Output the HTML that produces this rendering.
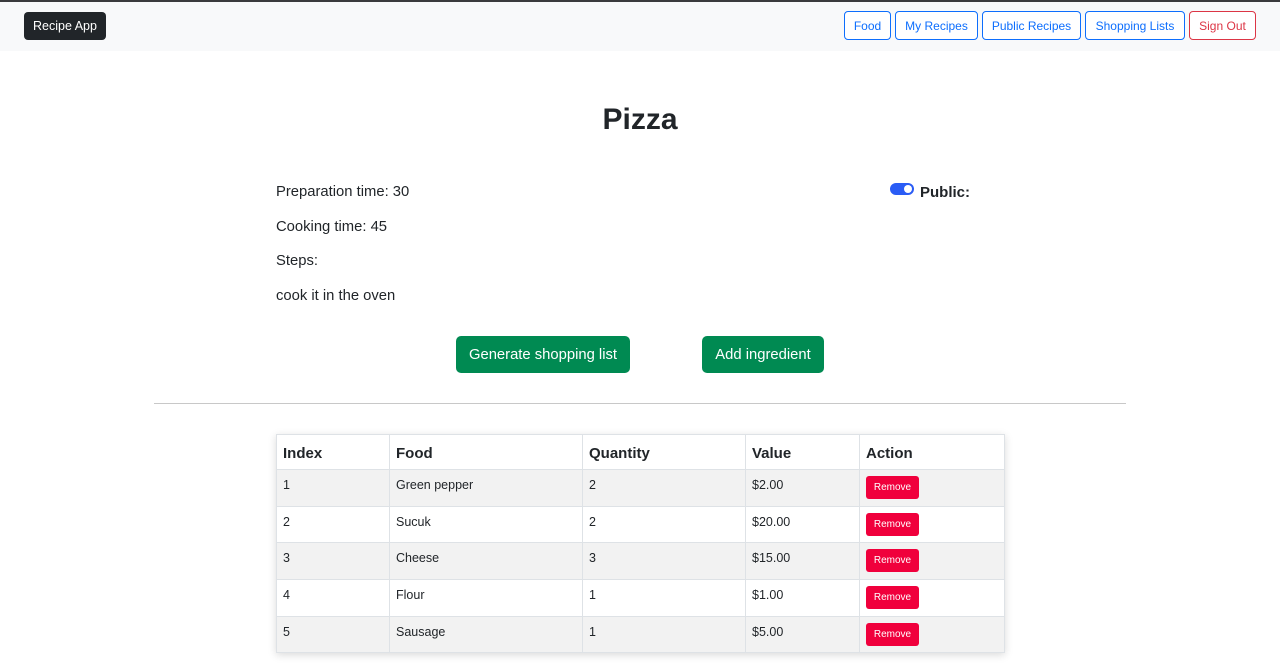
<!DOCTYPE html>
<html><head><style>
*{box-sizing:border-box;margin:0;padding:0}
body{width:1280px;height:666px;overflow:hidden;background:#fff;font-family:"Liberation Sans",sans-serif;color:#212529;position:relative}
.top{position:absolute;left:0;top:0;width:1280px;height:2px;background:#3a3b3d}
.nav{position:absolute;left:0;top:2px;width:1280px;height:49px;background:#f8f9fa}
.brand{position:absolute;left:24px;top:10px;width:82px;height:28px;background:#212529;color:#fff;border-radius:4px;font-size:12.5px;line-height:28px;text-align:center}
.nb{position:absolute;top:9px;height:29px;border:1px solid #0d6efd;color:#0d6efd;border-radius:4px;font-size:12px;line-height:28px;text-align:center;background:#fff}
h1{position:absolute;top:103px;left:0;width:1280px;text-align:center;font-size:30px;font-weight:bold}
.t{position:absolute;left:276px;font-size:14.8px}
.btn{position:absolute;top:336px;height:37px;background:#008a52;color:#fff;border-radius:5px;font-size:14.8px;line-height:38px;text-align:center}
.hr{position:absolute;left:154px;top:403px;width:972px;height:1px;background:#c8c8c8}
table{position:absolute;left:276px;top:434px;width:729px;border-collapse:collapse;box-shadow:0 2px 8px rgba(0,0,0,.15);font-size:12.5px}
td,th{border:1px solid #dee2e6;text-align:left;vertical-align:top;padding:8px 6px 0}
th{font-size:15px;height:35px;padding:10px 6px 0}
td{height:36.7px}
tr:nth-child(even) td{background:#f2f2f2}
.rm{display:inline-block;background:#f0003c;color:#fff;font-size:10px;width:53px;height:23px;line-height:23px;text-align:center;border-radius:3px;margin-top:-2px}
</style></head><body>
<div class="top"></div>
<div class="nav">
<div class="brand">Recipe App</div>
<div class="nb" style="left:844px;width:47px">Food</div>
<div class="nb" style="left:895px;width:83px">My Recipes</div>
<div class="nb" style="left:982px;width:99px">Public Recipes</div>
<div class="nb" style="left:1085px;width:100px">Shopping Lists</div>
<div class="nb" style="left:1189px;width:67px;border-color:#dc3545;color:#dc3545">Sign Out</div>
</div>
<h1>Pizza</h1>
<div class="t" style="top:184px">Preparation time: 30</div>
<div class="t" style="top:219px">Cooking time: 45</div>
<div class="t" style="top:253px">Steps:</div>
<div class="t" style="top:288px">cook it in the oven</div>
<div style="position:absolute;left:890px;top:183px;width:24px;height:12px;border-radius:6px;background:#2a5cf5"><div style="position:absolute;right:2px;top:2px;width:8px;height:8px;border-radius:50%;background:#fff"></div></div>
<div style="position:absolute;left:920px;top:184px;font-size:15px;font-weight:bold">Public:</div>
<div class="btn" style="left:456px;width:174px">Generate shopping list</div>
<div class="btn" style="left:702px;width:122px">Add ingredient</div>
<div class="hr"></div>
<table>
<tr><th style="width:113px">Index</th><th style="width:193px">Food</th><th style="width:163px">Quantity</th><th style="width:114px">Value</th><th>Action</th></tr>
<tr><td>1</td><td>Green pepper</td><td>2</td><td>$2.00</td><td><span class="rm">Remove</span></td></tr>
<tr><td>2</td><td>Sucuk</td><td>2</td><td>$20.00</td><td><span class="rm">Remove</span></td></tr>
<tr><td>3</td><td>Cheese</td><td>3</td><td>$15.00</td><td><span class="rm">Remove</span></td></tr>
<tr><td>4</td><td>Flour</td><td>1</td><td>$1.00</td><td><span class="rm">Remove</span></td></tr>
<tr><td>5</td><td>Sausage</td><td>1</td><td>$5.00</td><td><span class="rm">Remove</span></td></tr>
</table>
</body></html>
